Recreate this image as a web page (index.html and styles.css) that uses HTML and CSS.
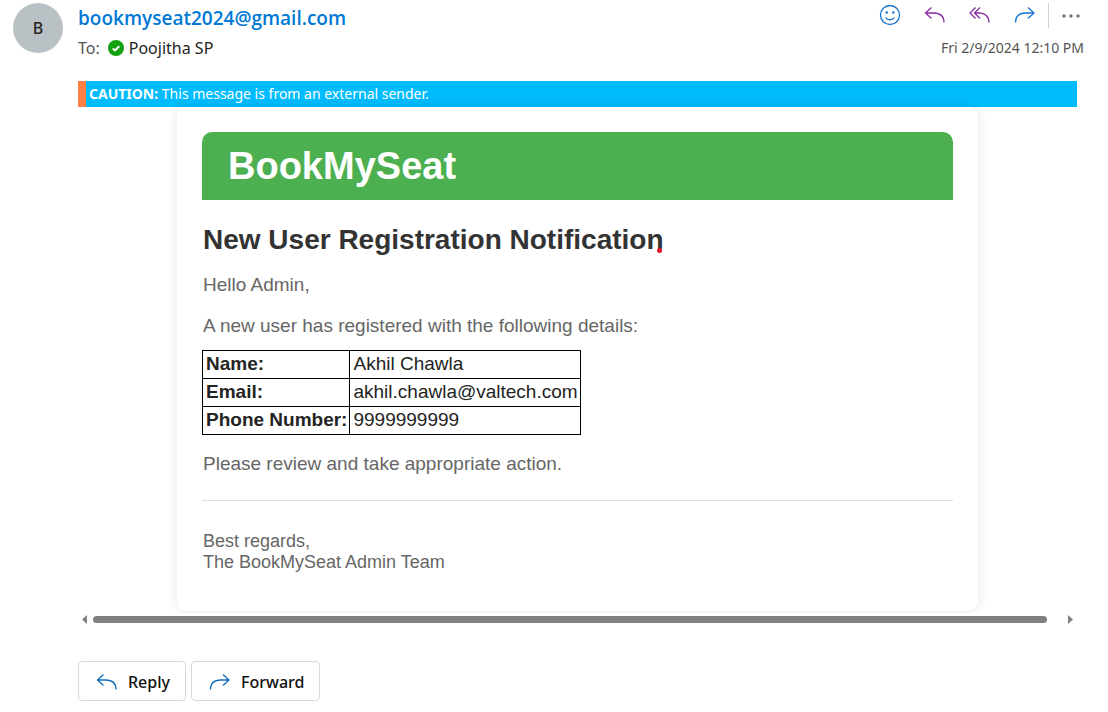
FILE: index.html
```html
<!DOCTYPE html>
<html lang="en">
<head>
<meta charset="utf-8">
<meta name="viewport" content="width=device-width, initial-scale=1">
<title>New User Registration Notification</title>
<link rel="stylesheet" href="styles.css">
</head>
<body>
<svg class="sprite" aria-hidden="true">
  <symbol id="icon-reply" viewBox="0 0 22 18"><path d="M7.500 1.500 1.500 7l6 5.500M1.500 7h8c6 0 10.500 3 10.500 9.500"/></symbol>
  <symbol id="icon-reply-all" viewBox="0 0 22 18"><path d="M6.500 1.500 1 7l5.500 5.500M11 1.500 5.500 7l5.500 5.500M5.500 7h5c5.500 0 9.500 3.500 9.500 9.500"/></symbol>
  <symbol id="icon-forward" viewBox="0 0 22 18"><path d="m14 1.500 6 5.500-6 5.500M20 7h-8C6 7 1.500 10 1.500 16.500"/></symbol>
</svg>
<article class="message">
  <div class="avatar" aria-hidden="true">B</div>
  <div class="content">
    <header class="head">
      <div class="people">
        <a class="sender" href="mailto:bookmyseat2024@gmail.com">bookmyseat2024@gmail.com</a>
        <div class="to"><span class="to-label">To:</span>
          <svg class="presence" viewBox="0 0 16 16" aria-hidden="true"><circle cx="8" cy="8" r="8"/><path d="m4.800 8.400 2.200 2 4.200-4.200"/></svg>
          <span>Poojitha SP</span>
        </div>
      </div>
      <div class="meta">
        <div class="actions">
          <button class="action blue" type="button" aria-label="React"><svg class="smile" viewBox="0 0 22 22"><circle cx="11" cy="11" r="9.500"/><path d="M6.500 13.500c2 3 7 3 9 0"/><circle class="eye" cx="7.700" cy="8.500" r="1.300"/><circle class="eye" cx="14.300" cy="8.500" r="1.300"/></svg></button>
          <button class="action purple" type="button" aria-label="Reply"><svg class="arrow"><use href="#icon-reply"/></svg></button>
          <button class="action purple" type="button" aria-label="Reply all"><svg class="arrow"><use href="#icon-reply-all"/></svg></button>
          <button class="action blue" type="button" aria-label="Forward"><svg class="arrow"><use href="#icon-forward"/></svg></button>
          <button class="action more" type="button" aria-label="More actions"><svg class="dots" viewBox="0 0 18 4"><circle cx="2" cy="2" r="1.700"/><circle cx="9" cy="2" r="1.700"/><circle cx="16" cy="2" r="1.700"/></svg></button>
        </div>
        <time class="date" datetime="2024-02-09T12:10">Fri 2/9/2024 12:10 PM</time>
      </div>
    </header>
    <div class="pane">
      <div class="viewport">
        <div class="caution"><strong>CAUTION:</strong> This message is from an external sender.</div>
        <main class="card">
          <h1 class="brand">BookMySeat</h1>
          <h2 class="title">New User Registration Notification<span class="mark"></span></h2>
          <p class="text">Hello Admin,</p>
          <p class="text">A new user has registered with the following details:</p>
          <table class="details">
            <tr><th scope="row">Name:</th><td>Akhil Chawla</td></tr>
            <tr><th scope="row">Email:</th><td>akhil.chawla@valtech.com</td></tr>
            <tr><th scope="row">Phone Number:</th><td>9999999999</td></tr>
          </table>
          <p class="text">Please review and take appropriate action.</p>
          <footer class="sign">Best regards,<br>The BookMySeat Admin Team</footer>
        </main>
      </div>
      <div class="scroll" aria-hidden="true">
        <svg class="tip" viewBox="0 0 5 9"><path d="M5 0v9L0 4.500z"/></svg>
        <div class="track"><div class="thumb"></div></div>
        <svg class="tip" viewBox="0 0 5 9"><path d="M0 0v9l5-4.500z"/></svg>
      </div>
      <div class="replies">
        <button class="reply" type="button"><svg class="arrow"><use href="#icon-reply"/></svg>Reply</button>
        <button class="reply" type="button"><svg class="arrow"><use href="#icon-forward"/></svg>Forward</button>
      </div>
    </div>
  </div>
</article>
</body>
</html>
```
FILE: styles.css
```css
* { box-sizing: border-box; }
body {
  margin: 0;
  background: #fff;
  color: #242424;
  font-family: "Segoe UI", "Noto Sans", "Open Sans", sans-serif;
}
button { font: inherit; cursor: pointer; }
.sprite { display: none; }
.message { display: flex; gap: 15px; padding: 3px 24px 11px 13px; }
.avatar {
  display: grid;
  place-items: center;
  flex: none;
  width: 50px;
  height: 50px;
  border-radius: 50%;
  background: #b9c1c5;
  font-size: 16px;
  font-weight: 500;
}
.content { flex: 1; min-width: 0; }
.head { display: flex; justify-content: space-between; height: 78px; }
.sender {
  display: block;
  color: #0078d4;
  font-family: "Segoe UI", "Open Sans", sans-serif;
  font-size: 19px;
  font-weight: 600;
  line-height: 30px;
  text-decoration: none;
}
.to { display: flex; align-items: center; gap: 5px; font-size: 16px; line-height: 30px; }
.to-label { margin-right: 3px; color: #555; }
.presence { width: 16px; height: 16px; fill: #13a10e; }
.presence path { fill: none; stroke: #fff; stroke-width: 2; }
.meta { display: flex; flex-direction: column; align-items: flex-end; }
.actions { display: flex; height: 30px; }
.action {
  display: grid;
  place-items: start center;
  width: 45px;
  height: 25px;
  padding: 3px 1px 3px 0;
  border: 0;
  background: none;
}
.action svg, .reply svg { fill: none; stroke: currentColor; stroke-width: 1.300; }
.blue { color: #1976d2; }
.purple { color: #8a2da5; }
.arrow { width: 22px; height: 18px; }
.smile { width: 22px; height: 22px; margin-top: -2px; }
.action .eye { fill: currentColor; stroke: none; }
.more { width: 36px; padding-left: 10px; border-left: 1px solid #d1d1d1; color: #777; }
.dots { width: 18px; height: 4px; margin-top: 8px; }
.action .dots { fill: currentColor; stroke: none; }
.date { color: #555; font-size: 14px; line-height: 30px; }
.pane { margin-right: 7px; }
.viewport { overflow: hidden; padding-bottom: 2px; }
.caution {
  padding-left: 3px;
  border-left: 8px solid #ff7f45;
  background: #00bcff;
  color: #fff;
  font-size: 14px;
  line-height: 26px;
}
.card {
  max-width: 801px;
  margin: 0 auto;
  padding: 25px 25px 38px;
  border-radius: 10px;
  background: #fff;
  box-shadow: 0 0 12px rgb(0 0 0 / 10%);
  font-family: Arial, "Liberation Sans", sans-serif;
}
.brand {
  margin: 0;
  padding: 12px 26px;
  border-radius: 10px 10px 0 0;
  background: #4caf50;
  color: #fff;
  font-size: 38px;
  line-height: 44px;
}
.title { margin: 24px 0 18px; color: #333; font-size: 28px; line-height: 32px; }
.title, .text { padding-left: 1px; }
.mark {
  display: inline-block;
  width: 5px;
  height: 5px;
  margin: 0 0 -4px -7px;
  border-radius: 50%;
  background: #e81123;
}
.text { margin: 0 0 19px; color: #666; font-size: 19px; line-height: 22px; }
.details {
  margin: -6px 0 18px;
  border-collapse: collapse;
  font-size: 19px;
  line-height: 21px;
}
.details th, .details td { height: 28px; padding: 2px 2px 4px 3px; border: 1px solid #000; text-align: left; }
.sign {
  margin-top: 25px;
  padding: 30px 1px 0;
  border-top: 1px solid #ddd;
  color: #666;
  font-size: 18px;
  line-height: 21px;
}
.scroll { display: flex; align-items: center; gap: 6px; padding: 2px 4px; }
.tip { flex: none; width: 5px; height: 9px; fill: #808080; }
.track { flex: 1; }
.thumb { width: 98.5%; height: 7px; border-radius: 4px; background: #808080; }
.replies { display: flex; gap: 5px; margin-top: 35px; }
.reply {
  display: flex;
  align-items: center;
  gap: 10px;
  height: 40px;
  padding: 1px 15px 0 17px;
  border: 1px solid #d9d9d9;
  border-radius: 4px;
  background: #fff;
  color: #111;
  font-size: 16px;
  font-weight: 500;
}
.reply svg { color: #0f6cbd; }
```
